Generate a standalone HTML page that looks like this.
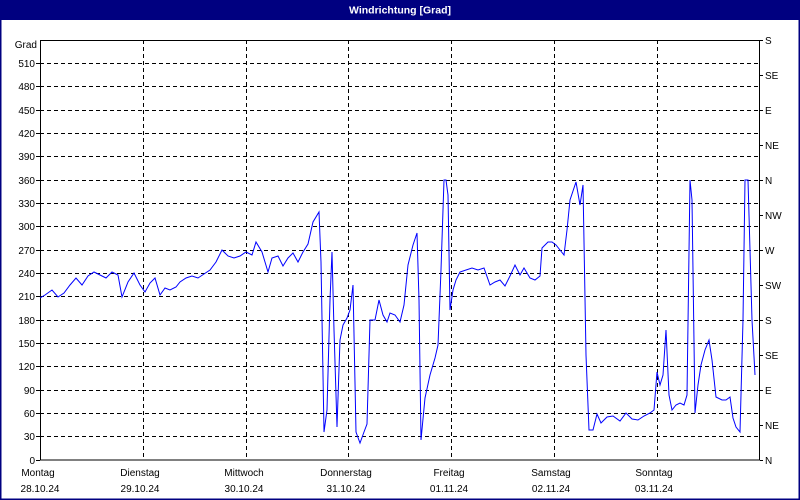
<!DOCTYPE html>
<html><head><style>
body{margin:0;width:800px;height:500px;overflow:hidden;background:#fff;font-family:"Liberation Sans",sans-serif;}
</style></head><body>
<svg width="800" height="500" xmlns="http://www.w3.org/2000/svg" style="display:block;font-family:'Liberation Sans',sans-serif;font-size:10px">
<rect x="0" y="0" width="800" height="500" fill="#fff"/>
<rect x="0.5" y="0.5" width="799" height="499" fill="none" stroke="#000080" stroke-width="2"/>
<rect x="0" y="0" width="800" height="20" fill="#000080"/>
<text x="400" y="13.5" fill="#fff" font-weight="bold" font-size="10.5" text-anchor="middle">Windrichtung [Grad]</text>
<g stroke="#000" stroke-dasharray="4,3" stroke-width="1">
<path d="M40 63.5H760M40 86.5H760M40 110.5H760M40 133.5H760M40 156.5H760M40 180.5H760M40 203.5H760M40 226.5H760M40 250.5H760M40 273.5H760M40 296.5H760M40 320.5H760M40 343.5H760M40 366.5H760M40 390.5H760M40 413.5H760M40 436.5H760"/>
<path d="M143.5 40V460M246.5 40V460M348.5 40V460M451.5 40V460M554.5 40V460M657.5 40V460"/>
</g>
<rect x="40.5" y="40.5" width="719" height="419.5" fill="none" stroke="#000"/>
<g stroke="#000"><path d="M36 63.5h4M36 86.5h4M36 110.5h4M36 133.5h4M36 156.5h4M36 180.5h4M36 203.5h4M36 226.5h4M36 250.5h4M36 273.5h4M36 296.5h4M36 320.5h4M36 343.5h4M36 366.5h4M36 390.5h4M36 413.5h4M36 436.5h4M36 460.5h4"/>
<path d="M760 40.5h3M760 75.5h3M760 110.5h3M760 145.5h3M760 180.5h3M760 215.5h3M760 250.5h3M760 285.5h3M760 320.5h3M760 355.5h3M760 390.5h3M760 425.5h3M760 460.5h3"/></g>
<g text-anchor="end">
<text x="37" y="48">Grad</text>
<text x="35" y="67">510</text><text x="35" y="90">480</text><text x="35" y="114">450</text><text x="35" y="137">420</text><text x="35" y="160">390</text><text x="35" y="184">360</text><text x="35" y="207">330</text><text x="35" y="230">300</text><text x="35" y="254">270</text><text x="35" y="277">240</text><text x="35" y="300">210</text><text x="35" y="324">180</text><text x="35" y="347">150</text><text x="35" y="370">120</text><text x="35" y="394">90</text><text x="35" y="417">60</text><text x="35" y="440">30</text><text x="35" y="464">0</text>
</g>
<g>
<text x="765" y="44">S</text><text x="765" y="79">SE</text><text x="765" y="114">E</text><text x="765" y="149">NE</text><text x="765" y="184">N</text><text x="765" y="219">NW</text><text x="765" y="254">W</text><text x="765" y="289">SW</text><text x="765" y="324">S</text><text x="765" y="359">SE</text><text x="765" y="394">E</text><text x="765" y="429">NE</text><text x="765" y="464">N</text>
</g>
<g text-anchor="middle">
<text x="38" y="476">Montag</text><text x="40" y="492">28.10.24</text>
<text x="140" y="476">Dienstag</text><text x="140" y="492">29.10.24</text>
<text x="244" y="476">Mittwoch</text><text x="244" y="492">30.10.24</text>
<text x="346" y="476">Donnerstag</text><text x="346" y="492">31.10.24</text>
<text x="449" y="476">Freitag</text><text x="449" y="492">01.11.24</text>
<text x="551" y="476">Samstag</text><text x="551" y="492">02.11.24</text>
<text x="654" y="476">Sonntag</text><text x="654" y="492">03.11.24</text>
</g>
<polyline fill="none" stroke="#0000ff" stroke-width="1" points="40,298 45,295 52,290 58,297 64,293 70,285 76,278 82,285 88,276 94,272 100,275 106,278 112,272 118,275 122,297 128,282 134,273 140,285 145,292 150,283 155,278 160,295 165,288 170,290 176,287 180,282 186,278 192,276 198,278 204,274 210,270 216,262 222,250 228,256 234,258 240,256 246,252 252,255 256,242 262,252 268,272 272,258 278,256 283,266 288,258 293,253 298,262 303,252 308,244 313,222 319,212 321,262 324,432 327,410 330,300 332,252 334,330 337,427 340,340 343,325 347,318 350,310 353,285 356,432 360,443 364,432 367,424 370,320 375,320 379,300 383,315 387,322 390,313 395,315 400,322 404,305 408,265 413,245 417,233 419,300 421,440 425,398 430,375 435,358 438,345 441,270 444,180 446,180 448,195 450,310 453,290 456,280 460,272 466,270 472,268 478,270 484,268 490,285 495,282 500,280 505,286 510,276 515,265 520,275 524,268 530,278 535,280 540,276 542,248 548,242 552,242 556,245 560,250 564,255 567,230 570,200 576,182 580,205 583,185 586,355 589,430 593,430 597,414 601,423 607,417 613,416 620,421 626,413 632,419 638,420 644,416 650,413 654,410 657,372 660,385 663,375 666,330 669,395 672,410 676,405 680,403 684,405 687,395 690,180 692,200 695,413 698,385 701,365 705,350 709,340 712,360 716,397 722,400 726,400 730,397 733,418 736,427 740,432 743,320 745,180 748,180 750,250 752,320 755,375"/>
</svg>
</body></html>
